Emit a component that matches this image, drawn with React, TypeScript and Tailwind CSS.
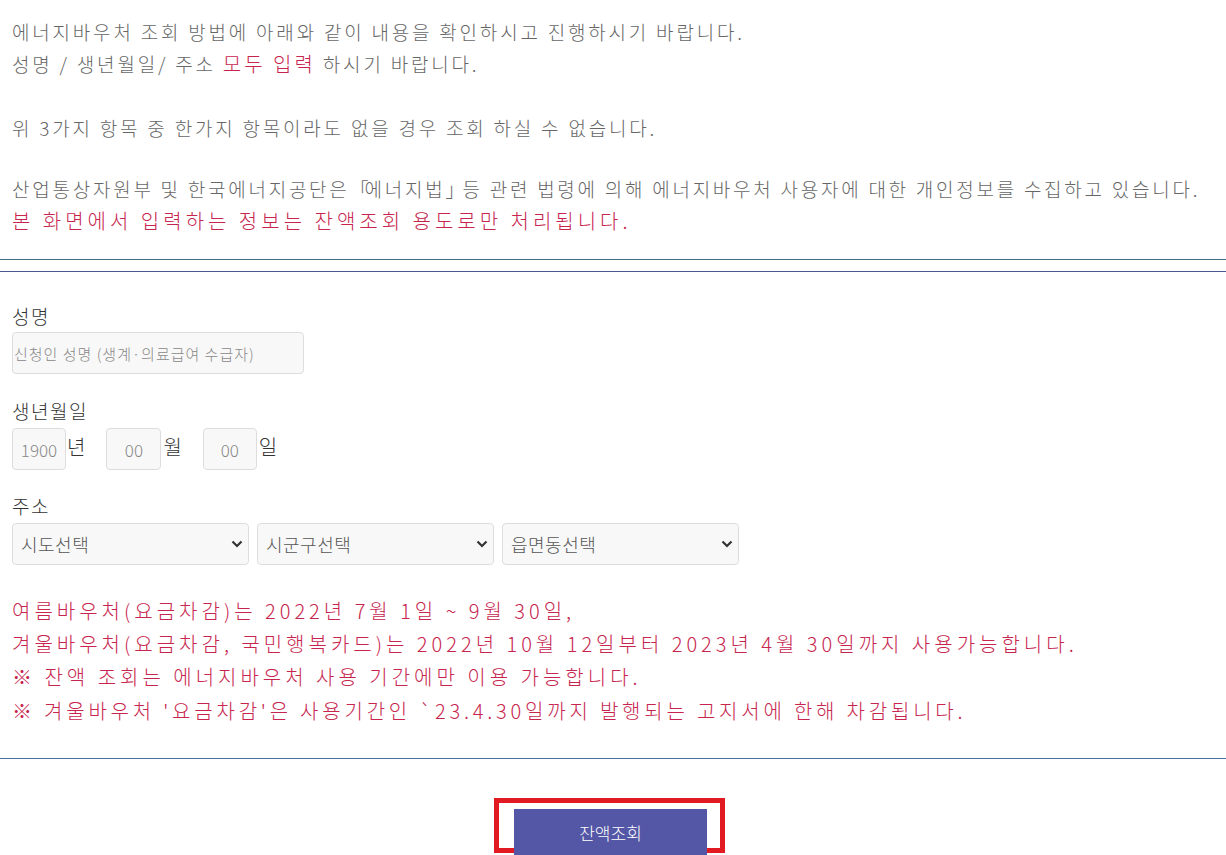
import React from "react";

const font = { fontFamily: '"Malgun Gothic", "Noto Sans CJK KR", "Noto Sans", sans-serif' };

function Chevron() {
  return (
    <svg width="12" height="8" viewBox="0 0 12 8" className="pointer-events-none absolute right-[6px] top-1/2 -translate-y-1/2">
      <path d="M1.5 1.5 L6 6 L10.5 1.5" fill="none" stroke="#333" strokeWidth="2.2" />
    </svg>
  );
}

function Select({ label }: { label: string }) {
  return (
    <div className="relative w-[237px] h-[42px]">
      <select
        defaultValue=""
        className="appearance-none w-full h-full bg-[#f8f8f8] border border-[#dddddd] rounded-[4px] pl-[8px] text-[18px] font-light tracking-[0.5px] text-[#555] outline-none"
        style={font}
      >
        <option value="">{label}</option>
      </select>
      <Chevron />
    </div>
  );
}

export default function App() {
  return (
    <div className="w-[1226px] min-h-[855px] bg-white overflow-hidden" style={font}>
      <div className="px-[12px] pt-[16px] text-[19px] leading-[32px] text-[#666] font-light tracking-[2.8px] whitespace-nowrap">
        <p>에너지바우처 조회 방법에 아래와 같이 내용을 확인하시고 진행하시기 바랍니다.</p>
        <p className="h-[34px]">
          성명 / 생년월일/ 주소 <span className="text-[20px] text-[#c7254e] tracking-[3px]">모두 입력</span> 하시기 바랍니다.
        </p>
        <p className="h-[30px]"></p>
        <p>위 3가지 항목 중 한가지 항목이라도 없을 경우 조회 하실 수 없습니다.</p>
        <p className="h-[29px]"></p>
        <p className="tracking-[2.75px]">산업통상자원부 및 한국에너지공단은<span className="tracking-[-4px]">「</span>에너지법<span className="tracking-[-2px]">」</span>등 관련 법령에 의해 에너지바우처 사용자에 대한 개인정보를 수집하고 있습니다.</p>
        <p className="text-[20px] text-[#c7254e] tracking-[4px]">본 화면에서 입력하는 정보는 잔액조회 용도로만 처리됩니다.</p>
      </div>

      <div className="mt-[22px] h-px bg-[#3f6f80]"></div>
      <div className="mt-[11px] h-px bg-[#4a5a90]"></div>

      <div className="px-[12px] pt-[28px] text-[19px] text-[#333] font-light">
        <div className="h-[32px] leading-[32px] tracking-[1.5px]">성명</div>
        <input
          placeholder="신청인 성명 (생계·의료급여 수급자)"
          className="block w-[292px] h-[42px] bg-[#f8f8f8] border border-[#dddddd] rounded-[4px] px-[1px] text-[15px] tracking-[1px] font-light placeholder:text-[#888] outline-none"
          style={font}
        />

        <div className="mt-[21px] h-[32px] leading-[32px] tracking-[1.5px]">생년월일</div>
        <div className="flex items-center h-[42px] mt-[1px]">
          <input
            placeholder="1900"
            className="w-[54px] h-[42px] bg-[#f8f8f8] border border-[#dddddd] rounded-[4px] text-center text-[17px] font-light placeholder:text-[#888] outline-none"
            style={font}
          />
          <span className="ml-[1px] text-[20px] -mt-[4px]">년</span>
          <input
            placeholder="00"
            className="ml-[21px] w-[55px] h-[42px] bg-[#f8f8f8] border border-[#dddddd] rounded-[4px] text-center text-[17px] font-light placeholder:text-[#888] outline-none"
            style={font}
          />
          <span className="ml-[2px] text-[20px] -mt-[4px]">월</span>
          <input
            placeholder="00"
            className="ml-[21px] w-[54px] h-[42px] bg-[#f8f8f8] border border-[#dddddd] rounded-[4px] text-center text-[17px] font-light placeholder:text-[#888] outline-none"
            style={font}
          />
          <span className="ml-[2px] text-[20px] -mt-[4px]">일</span>
        </div>

        <div className="mt-[20px] h-[32px] leading-[32px] tracking-[1.5px]">주소</div>
        <div className="flex gap-[8px] mt-[1px]">
          <Select label="시도선택" />
          <Select label="시군구선택" />
          <Select label="읍면동선택" />
        </div>

        <div className="mt-[29px] text-[20px] leading-[33.5px] text-[#c7254e] tracking-[4px] whitespace-nowrap">
          <p className="h-[33px]">여름바우처(요금차감)는 2022년 7월 1일 ~ 9월 30일,</p>
          <p className="h-[33px]">겨울바우처(요금차감, 국민행복카드)는 2022년 10월 12일부터 2023년 4월 30일까지 사용가능합니다.</p>
          <p className="h-[34px]">※ 잔액 조회는 에너지바우처 사용 기간에만 이용 가능합니다.</p>
          <p className="h-[34px] tracking-[3.8px]">※ 겨울바우처 '요금차감'은 사용기간인 `23.4.30일까지 발행되는 고지서에 한해 차감됩니다.</p>
        </div>
      </div>

      <div className="mt-[30px] h-px bg-[#46709a]"></div>

      <div className="flex justify-center pt-[39px] pr-[7px]">
        <div className="relative w-[231px] h-[60px]">
          <div className="absolute left-0 top-0 w-[231px] h-[55px] border-[5px] border-[#e21b23]"></div>
          <button
            className="absolute left-[20px] top-[11px] w-[193px] h-[48px] bg-[#5457a6] text-white text-[17px] font-light z-10"
            style={font}
          >
            잔액조회
          </button>
        </div>
      </div>
    </div>
  );
}
